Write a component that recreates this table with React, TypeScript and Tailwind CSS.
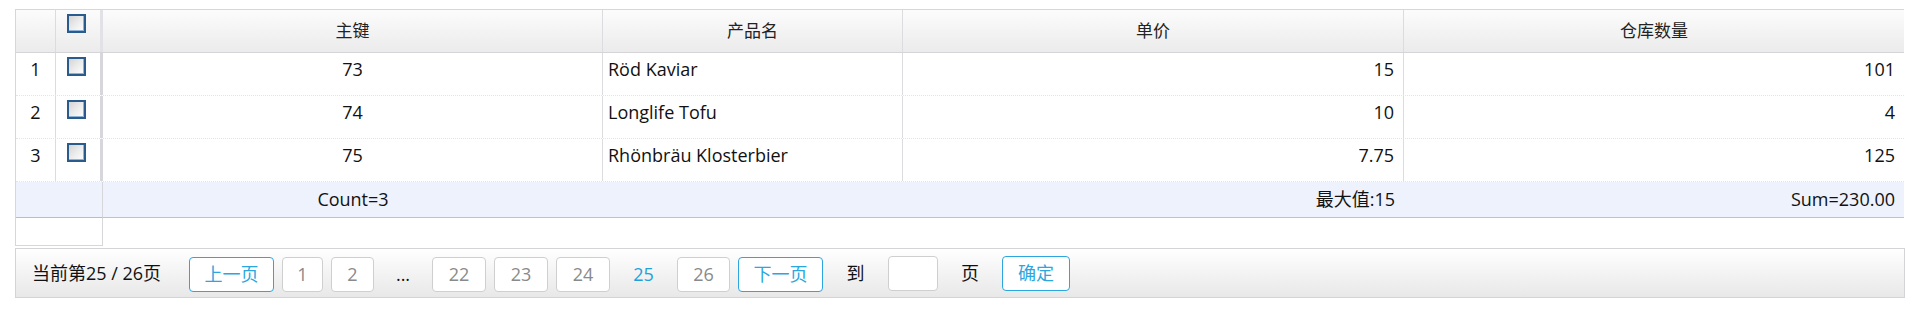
import React from 'react';

type Product = { id: number; name: string; price: string; stock: number };

const products: Product[] = [
    { id: 73, name: 'Röd Kaviar', price: '15', stock: 101 },
    { id: 74, name: 'Longlife Tofu', price: '10', stock: 4 },
    { id: 75, name: 'Rhönbräu Klosterbier', price: '7.75', stock: 125 },
];

const font = { fontFamily: '"Open Sans", "Noto Sans CJK SC", sans-serif' };

const CheckBox = () => (
    <span className="block w-[19px] h-[19px] border-2 border-[#2a5b8d] bg-gradient-to-br from-[#d4d4d4] via-[#ececec] to-white shadow-[inset_-1px_-1px_0_#8fb2d6]" />
);

const PageButton = ({ label, w, blue = false }: { label: string; w: string; blue?: boolean }) => (
    <button
        className={`${w} h-[35px] mx-1 mt-[3px] rounded-[4px] border bg-white flex items-center justify-center ${
            blue ? 'border-[#2ba6df] text-[#2ba6df]' : 'border-[#cfcfcf] text-[#8a8a8a]'
        }`}
    >
        {label}
    </button>
);

export default function App() {
    return (
        <div className="pl-[15px] pt-[9px] bg-white min-h-[335px] text-[18px] text-[#111]" style={font}>
            <div className="w-max border-l border-t border-[#d6d6db]">
                {/* header */}
                <div className="flex h-[43px] border-b border-[#d4d4d9] bg-gradient-to-b from-[#fcfcfc] to-[#ebebeb] text-[#222] text-[17px]">
                    <div className="w-[40px] border-r border-[#dcdce0]" />
                    <div className="w-[47px] border-r-[3px] border-[#e2e2e6] flex justify-center pt-[4px]">
                        <span className="mr-[3px]"><CheckBox /></span>
                    </div>
                    <div className="w-[500px] border-r border-[#dcdce0] flex items-center justify-center">主键</div>
                    <div className="w-[300px] border-r border-[#dcdce0] flex items-center justify-center">产品名</div>
                    <div className="w-[501px] border-r border-[#dcdce0] flex items-center justify-center">单价</div>
                    <div className="w-[500px] flex items-center justify-center">仓库数量</div>
                </div>

                {/* rows */}
                {products.map((p, i) => (
                    <div key={p.id} className="flex h-[43px] border-b border-dotted border-[#e4e4e4] leading-[25px]">
                        <div className="w-[40px] border-r border-[#dcdce0] text-center pt-[4px]">{i + 1}</div>
                        <div className="w-[47px] border-r-[3px] border-[#d6d6db] flex justify-center pt-[4px]">
                            <span className="mr-[3px]"><CheckBox /></span>
                        </div>
                        <div className="w-[500px] border-r border-[#dcdce0] text-center pt-[4px]">{p.id}</div>
                        <div className="w-[300px] border-r border-[#dcdce0] pl-[5px] pt-[4px]">{p.name}</div>
                        <div className="w-[501px] border-r border-[#dcdce0] text-right pr-[9px] pt-[4px]">{p.price}</div>
                        <div className="w-[500px] text-right pr-[9px] pt-[4px]">{p.stock}</div>
                    </div>
                ))}

                {/* footer */}
                <div className="flex h-[36px] bg-[#eef2fd] items-stretch">
                    <div className="w-[87px] border-r border-b border-r-[#d6d6db] border-b-[#a9c0e3]" />
                    <div className="w-[500px] flex items-center justify-center border-b border-[#b4c4de]">Count=3</div>
                    <div className="w-[300px] border-b border-[#b4c4de]" />
                    <div className="w-[501px] flex items-center justify-end pr-[9px] border-b border-[#b4c4de]">最大值:15</div>
                    <div className="w-[500px] flex items-center justify-end pr-[9px] border-b border-[#b4c4de]">Sum=230.00</div>
                </div>

                {/* scroll filler */}
                <div className="flex h-[28px]">
                    <div className="w-[87px] border-r border-b border-[#d6d6db]" />
                </div>
            </div>

            {/* pager */}
            <div className="mt-[2px] w-[1890px] h-[50px] border border-[#d4d4d8] bg-gradient-to-b from-white to-[#e8e8e8] flex items-center pl-[16px] text-[18px]">
                <span className="w-[132px] whitespace-nowrap text-[#111]">当前第25 / 26页</span>
                <span className="ml-[21px]" />
                <PageButton label="上一页" w="w-[85px]" blue />
                <PageButton label="1" w="w-[41px]" />
                <PageButton label="2" w="w-[43px]" />
                <span className="w-[50px] text-center mt-[3px]">...</span>
                <PageButton label="22" w="w-[54px]" />
                <PageButton label="23" w="w-[54px]" />
                <PageButton label="24" w="w-[54px]" />
                <span className="w-[59px] text-center text-[#1fa0da] mt-[3px]">25</span>
                <PageButton label="26" w="w-[53px]" />
                <PageButton label="下一页" w="w-[85px]" blue />
                <span className="w-[57px] text-center">到</span>
                <input className="w-[50px] h-[35px] mx-1 rounded-[4px] border border-[#cfcfcf] bg-white outline-none" />
                <span className="w-[56px] text-center">页</span>
                <button className="w-[68px] h-[35px] mx-1 rounded-[4px] border border-[#2ba6df] text-[#2ba6df] bg-white">确定</button>
            </div>
        </div>
    );
}
